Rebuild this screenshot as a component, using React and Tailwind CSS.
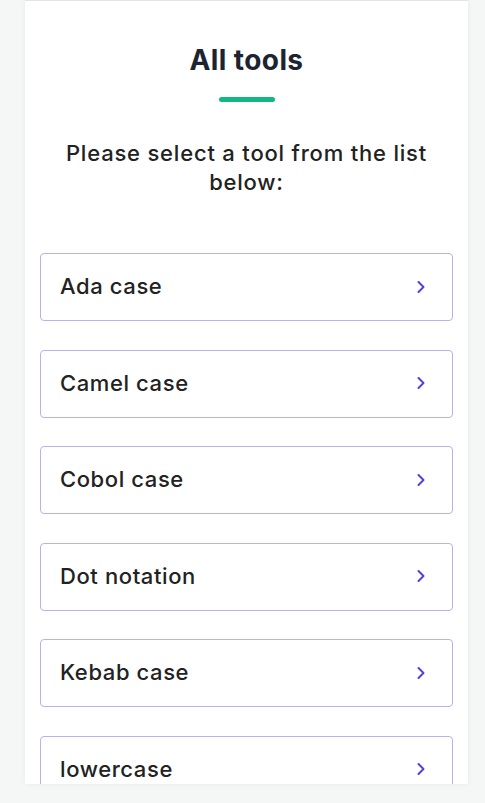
import { ChevronRight } from 'lucide-react'

const tools = ['Ada case', 'Camel case', 'Cobol case', 'Dot notation', 'Kebab case', 'lowercase']

export default function App() {
  return (
    <div className="h-[803px] overflow-hidden bg-[#f5f6f6] font-['Inter','Noto_Sans',sans-serif]">
      <div className="ml-[25px] w-[443px] h-[784px] overflow-hidden bg-white border-t border-[#e2e4e4] shadow-[0_0_6px_rgba(0,0,0,0.06)]">
        <div className="pt-[41px] flex flex-col items-center">
          <h1 className="text-[28px] leading-[36px] font-bold text-[#1d2430] tracking-[0.4px]">All tools</h1>
          <div className="mt-[19px] w-[56px] h-[5px] rounded-full bg-[#10b981]" />
          <p className="mt-[37px] px-[20px] text-center text-[22px] leading-[29px] font-medium text-[#222] tracking-[0.8px]">
            Please select a tool from the list below:
          </p>
        </div>
        <ul className="mt-[56px] px-[15px] flex flex-col gap-[28.6px]">
          {tools.map((t) => (
            <li
              key={t}
              className="h-[68px] flex items-center justify-between pl-[19px] pr-[21px] pb-[1px] border border-[#b8b1ee] rounded-[4px] text-[22px] font-medium text-[#222] tracking-[0.6px]"
            >
              <span>{t}</span>
              <ChevronRight className="w-[20px] h-[20px] text-[#5040dc]" strokeWidth={2.4} />
            </li>
          ))}
        </ul>
      </div>
    </div>
  )
}
